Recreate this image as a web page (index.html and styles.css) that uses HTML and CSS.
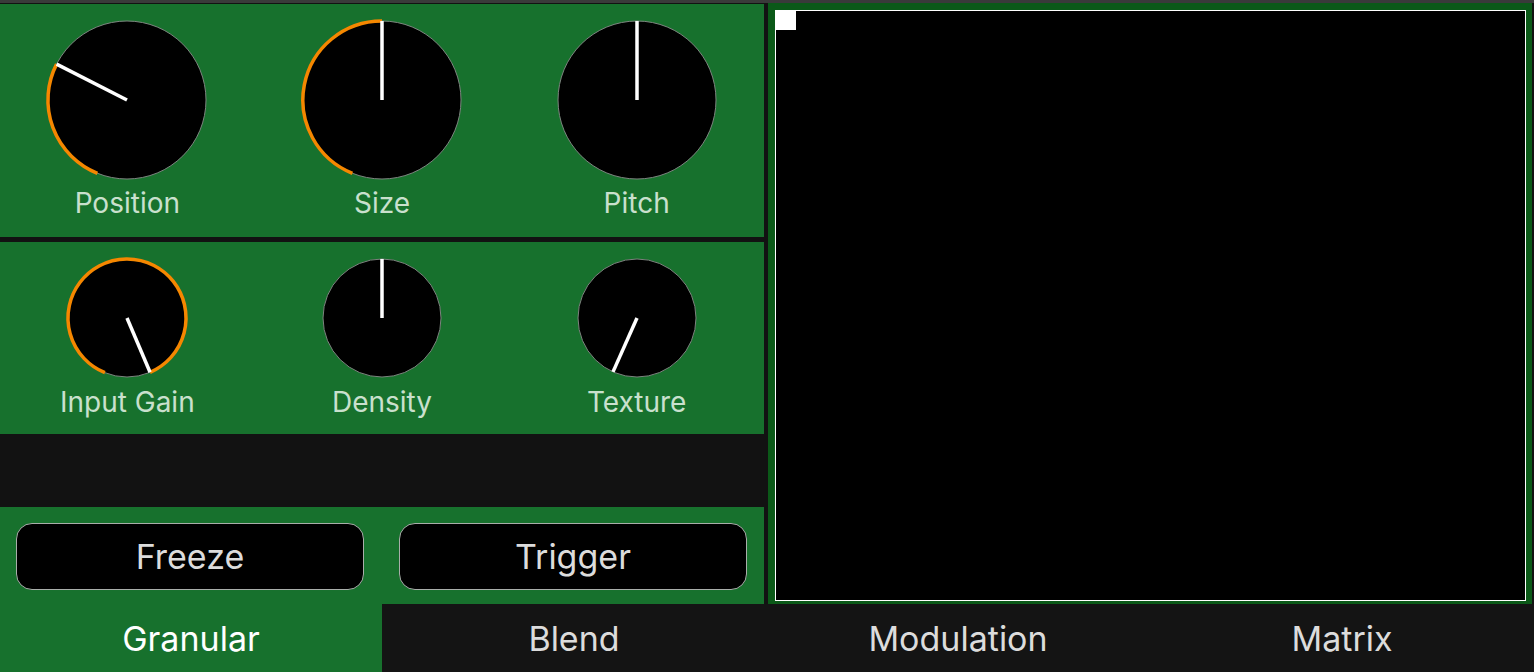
FILE: index.html
```html
<!DOCTYPE html>
<html lang="en">
<head>
  <meta charset="UTF-8" />
  <meta name="viewport" content="width=device-width, initial-scale=1.0" />
  <title>Granular</title>
  <link rel="stylesheet" href="styles.css">
</head>
<body>
  <div class="top-strip"></div>
  <div class="main">
    <div class="left-col">
      <!-- Row 1: big knobs -->
      <div class="panel knobs-big">
        <div class="knob">
          <svg width="166" height="166" viewBox="0 0 166 166">
            <circle class="knob-body" cx="83" cy="83" r="79" />
            <path class="knob-arc" d="M53.4 156.3 A79 79 0 0 1 12.6 47.1" />
            <line class="knob-pointer" x1="83" y1="83" x2="12.6" y2="47.1" />
          </svg>
          <p class="knob-label">Position</p>
        </div>
        <div class="knob">
          <svg width="166" height="166" viewBox="0 0 166 166">
            <circle class="knob-body" cx="83" cy="83" r="79" />
            <path class="knob-arc" d="M53.4 156.3 A79 79 0 0 1 83 4" />
            <line class="knob-pointer" x1="83" y1="83" x2="83" y2="4" />
          </svg>
          <p class="knob-label">Size</p>
        </div>
        <div class="knob">
          <svg width="166" height="166" viewBox="0 0 166 166">
            <circle class="knob-body" cx="83" cy="83" r="79" />
            <line class="knob-pointer" x1="83" y1="83" x2="83" y2="4" />
          </svg>
          <p class="knob-label">Pitch</p>
        </div>
      </div>

      <!-- Row 2: small knobs -->
      <div class="panel knobs-small">
        <div class="knob">
          <svg width="126" height="126" viewBox="0 0 126 126">
            <circle class="knob-body" cx="63" cy="63" r="59" />
            <path class="knob-arc" d="M40.9 117.7 A59 59 0 1 1 86.05 117.3" />
            <line class="knob-pointer" x1="63" y1="63" x2="86.05" y2="117.3" />
          </svg>
          <p class="knob-label">Input Gain</p>
        </div>
        <div class="knob">
          <svg width="126" height="126" viewBox="0 0 126 126">
            <circle class="knob-body" cx="63" cy="63" r="59" />
            <line class="knob-pointer" x1="63" y1="63" x2="63" y2="4" />
          </svg>
          <p class="knob-label">Density</p>
        </div>
        <div class="knob">
          <svg width="126" height="126" viewBox="0 0 126 126">
            <circle class="knob-body" cx="63" cy="63" r="59" />
            <line class="knob-pointer" x1="63" y1="63" x2="39" y2="116.9" />
          </svg>
          <p class="knob-label">Texture</p>
        </div>
      </div>

      <div class="spacer"></div>

      <div class="panel buttons">
        <button class="pad-button">Freeze</button>
        <button class="pad-button">Trigger</button>
      </div>
    </div>

    <div class="xy-panel">
      <div class="xy-pad">
        <div class="xy-handle"></div>
      </div>
    </div>
  </div>

  <nav class="tabs">
    <div class="tab active">Granular</div>
    <div class="tab">Blend</div>
    <div class="tab">Modulation</div>
    <div class="tab">Matrix</div>
  </nav>
</body>
</html>
```

FILE: styles.css
```css
:root {
  --green: #17712d;
  --green-dark: #0b5918;
  --bg: #121212;
  --tab-bg: #141414;
  --orange: #f58700;
  --label: #c9e0cd;
  --button-text: #dcdcdc;
}
* {
  padding: 0;
  margin: 0;
  box-sizing: border-box;
  font-family: 'Inter', 'Noto Sans', sans-serif;
}
body {
  width: 1534px;
  height: 672px;
  background-color: var(--bg);
  overflow: hidden;
  display: flex;
  flex-direction: column;
}
.top-strip {
  height: 3px;
  background-color: #3a3a3a;
}
.main {
  height: 601px;
  display: grid;
  grid-template-columns: 764px 764px;
  gap: 4px;
}
.left-col {
  display: flex;
  flex-direction: column;
  padding-top: 1px;
}
.panel {
  background-color: var(--green);
}
.knobs-big {
  height: 233px;
  display: grid;
  grid-template-columns: repeat(3, 1fr);
  padding-top: 13px;
}
.knobs-small {
  height: 192px;
  margin-top: 5px;
  display: grid;
  grid-template-columns: repeat(3, 1fr);
  padding-top: 13px;
}
.knob {
  display: flex;
  flex-direction: column;
  align-items: center;
}
.knob svg {
  display: block;
}
.knob-body {
  fill: #000;
  stroke: #7d857f;
  stroke-width: 1;
}
.knob-arc {
  fill: none;
  stroke: var(--orange);
  stroke-width: 3.5;
}
.knob-pointer {
  stroke: #fff;
  stroke-width: 3.5;
}
.knob-label {
  font-size: 28px;
  line-height: 34px;
  color: var(--label);
  margin-top: 3px;
}
.knobs-small .knob-label {
  margin-top: 4px;
}
.spacer {
  height: 73px;
}
.buttons {
  flex: 1;
  display: flex;
  gap: 35px;
  padding: 16px 17px 14px 16px;
}
.pad-button {
  flex: 1;
  background-color: #000;
  border: 1px solid #a9aeaa;
  border-radius: 16px;
  color: var(--button-text);
  font-size: 34px;
}
.xy-panel {
  background-color: var(--green-dark);
  padding: 7px 6px 3px 7px;
}
.xy-pad {
  height: 100%;
  background-color: #000;
  border: 1.5px solid #fff;
}
.xy-handle {
  width: 20px;
  height: 19px;
  background-color: #fff;
}
.tabs {
  flex: 1;
  display: grid;
  grid-template-columns: 382px repeat(3, 1fr);
  background-color: var(--tab-bg);
}
.tab {
  display: flex;
  align-items: center;
  justify-content: center;
  font-size: 34px;
  color: var(--button-text);
}
.tab.active {
  background-color: var(--green);
  color: #fff;
}
```
